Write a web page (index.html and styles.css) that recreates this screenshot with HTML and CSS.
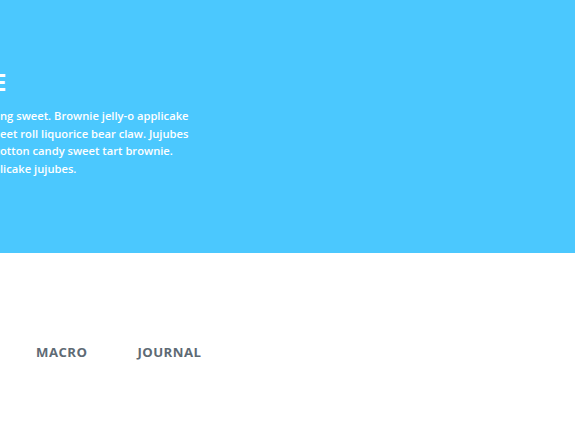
FILE: index.html
```html
<!DOCTYPE html>
<html>
<head>
<meta charset="utf-8">
<link rel="stylesheet" href="styles.css">
</head>
<body>
<header class="hero">
  <div class="hero-content">
    <h1 class="hero-title"><span class="line"><span class="cut">WELCOM</span><span class="last">E</span></span></h1>
    <p class="hero-text">
      <span class="line"><span class="cut">Cupcake ipsum dolor sit amet ici</span>ng sweet. Brownie jelly-o applicake</span>
      <span class="line"><span class="cut">sw</span>eet roll liquorice bear claw. Jujubes</span>
      <span class="line"><span class="cut">c</span>otton candy sweet tart brownie.</span>
      <span class="line"><span class="cut">App</span>licake jujubes.</span>
    </p>
  </div>
</header>
<nav class="nav">
  <a class="nav-link">MACRO</a>
  <a class="nav-link">JOURNAL</a>
</nav>
</body>
</html>
```
FILE: styles.css
```css
html, body {
  margin: 0;
  padding: 0;
  background: #ffffff;
  overflow: hidden;
}
body {
  font-family: "Open Sans", "Noto Sans", sans-serif;
  width: 575px;
  height: 447px;
}
.hero {
  background: #4bc8fe;
  height: 253px;
  box-sizing: border-box;
  padding-top: 66px;
  overflow: hidden;
}
.hero-content {
  display: flex;
  flex-direction: column;
}
.line {
  position: relative;
  display: block;
  white-space: nowrap;
}
.cut {
  position: absolute;
  right: 100%;
  top: 0;
}
.hero-title {
  margin: 0;
  color: #ffffff;
  font-size: 24px;
  font-weight: 700;
  line-height: 32px;
}
.hero-title .last {
  display: inline-block;
  margin-left: -7px;
}
.hero-text {
  margin: 9px 0 0 0;
  color: #ffffff;
  font-size: 11.2px;
  font-weight: 600;
  line-height: 17.7px;
}
.nav {
  display: flex;
  gap: 50px;
  padding: 90px 0 0 36px;
}
.nav-link {
  color: #5e6a74;
  font-size: 13.2px;
  font-weight: 700;
  letter-spacing: 0.45px;
}
```
